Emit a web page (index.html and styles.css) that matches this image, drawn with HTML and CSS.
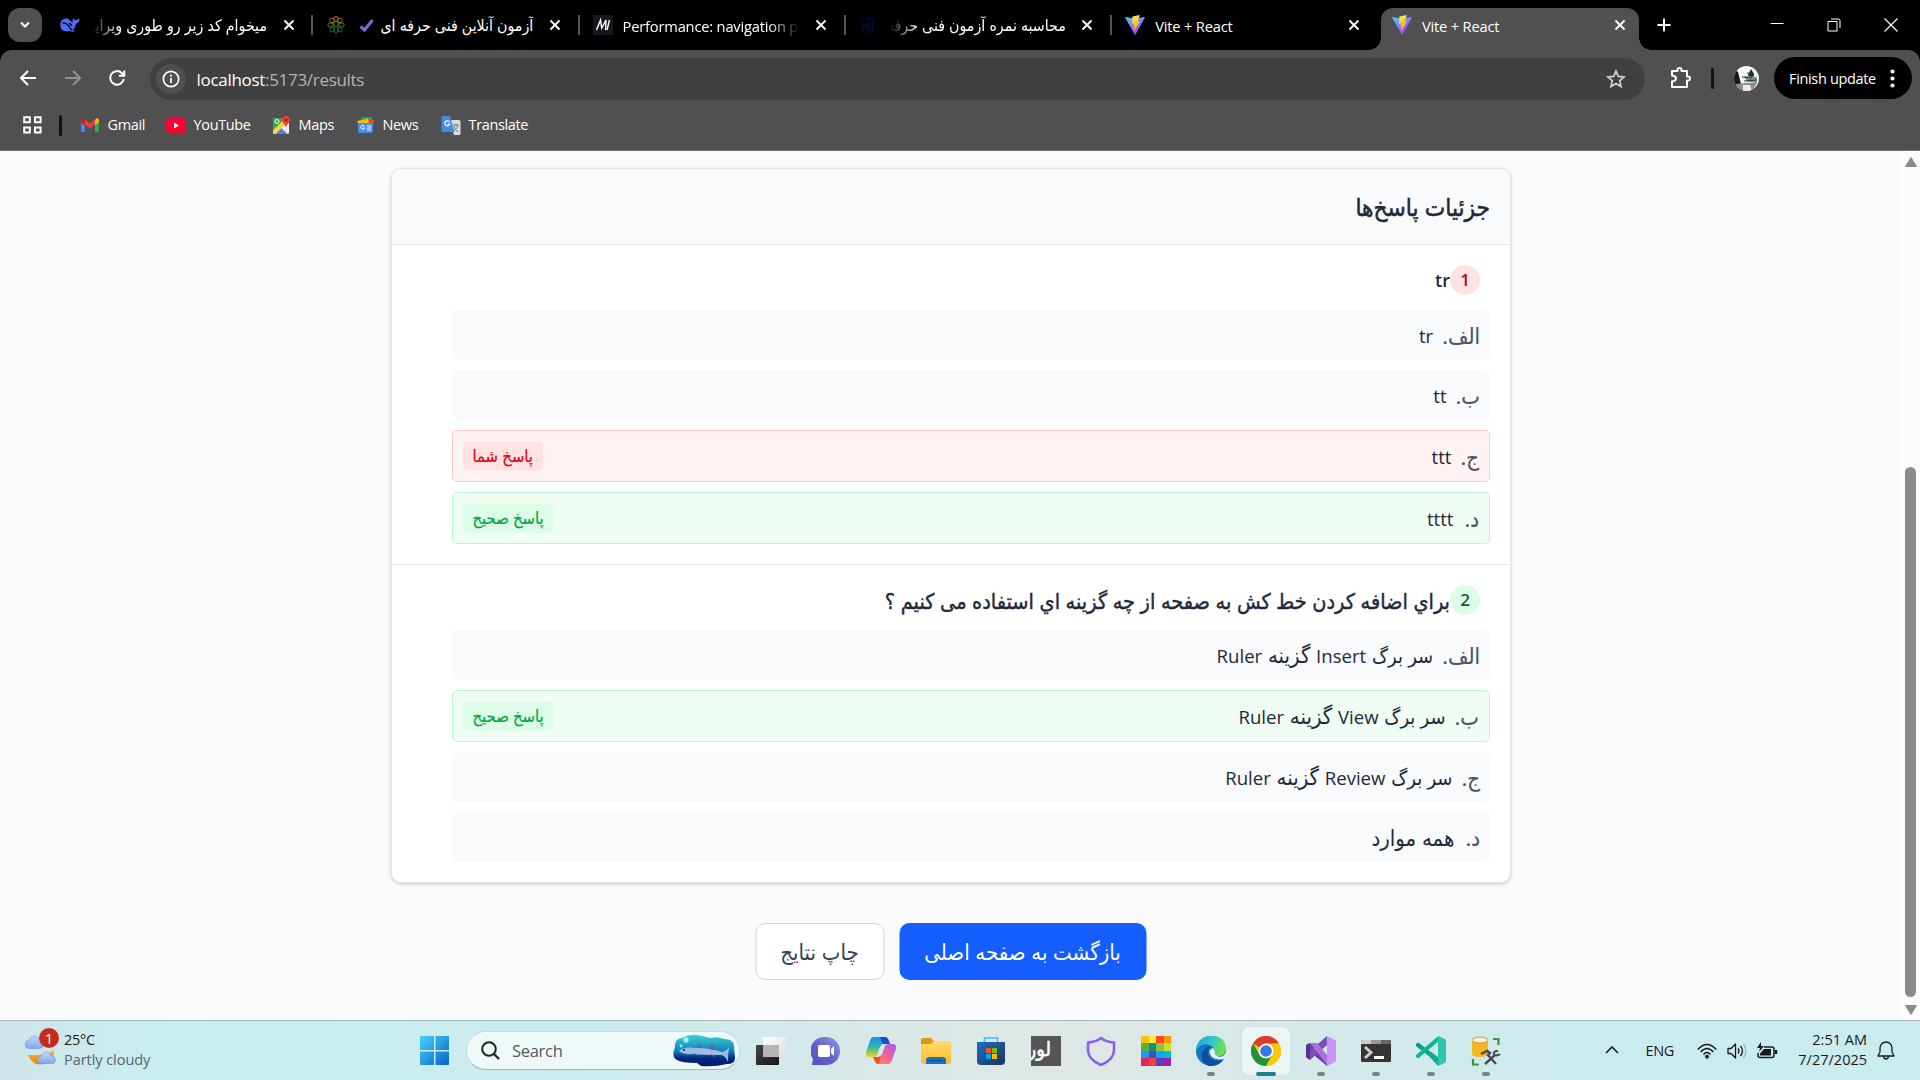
FILE: index.html
```html
<!DOCTYPE html>
<html lang="fa">
<head>
<meta charset="utf-8">
<title>Vite + React</title>
<link rel="stylesheet" href="styles.css">
</head>
<body>
<svg class="defs" width="0" height="0" aria-hidden="true">
  <defs>
    <linearGradient id="viteA" x1="0" y1="0" x2=".6" y2="1"><stop offset="0" stop-color="#41d1ff"/><stop offset="1" stop-color="#bd34fe"/></linearGradient>
    <linearGradient id="viteB" x1=".4" y1="0" x2=".6" y2="1"><stop offset="0" stop-color="#ffea83"/><stop offset=".2" stop-color="#ffdd35"/><stop offset="1" stop-color="#ffa800"/></linearGradient>
    <linearGradient id="winG" x1="0" y1="0" x2="1" y2="1"><stop offset="0" stop-color="#4cd0fb"/><stop offset="1" stop-color="#0067c6"/></linearGradient>
    <linearGradient id="sea" x1="0" y1="0" x2="0" y2="1"><stop offset="0" stop-color="#3ed0d0"/><stop offset=".5" stop-color="#1482bd"/><stop offset=".75" stop-color="#04277e"/><stop offset="1" stop-color="#031a68"/></linearGradient>
    <linearGradient id="dark" x1="0" y1="0" x2="1" y2="1"><stop offset="0" stop-color="#444"/><stop offset="1" stop-color="#161616"/></linearGradient>
    <linearGradient id="light" x1="0" y1="0" x2="1" y2="1"><stop offset="0" stop-color="#fff"/><stop offset="1" stop-color="#dcdcdc"/></linearGradient>
    <linearGradient id="chat" x1="0" y1="1" x2="1" y2="0"><stop offset="0" stop-color="#4a50c4"/><stop offset=".5" stop-color="#6a62c4"/><stop offset="1" stop-color="#8ba0f0"/></linearGradient>
    <linearGradient id="copA" x1="0" y1="0" x2="0" y2="1"><stop offset="0" stop-color="#1b8df0"/><stop offset=".5" stop-color="#2bb7b0"/><stop offset="1" stop-color="#f5d21c"/></linearGradient>
    <linearGradient id="copB" x1="1" y1="0" x2="0" y2="1"><stop offset="0" stop-color="#a35cf0"/><stop offset=".5" stop-color="#f0629a"/><stop offset="1" stop-color="#ff9a3c"/></linearGradient>
    <linearGradient id="fold" x1="0" y1="0" x2="0" y2="1"><stop offset="0" stop-color="#ffdc6e"/><stop offset="1" stop-color="#fdbc2c"/></linearGradient>
    <linearGradient id="store" x1="0" y1="0" x2="1" y2="1"><stop offset="0" stop-color="#1b6fc0"/><stop offset="1" stop-color="#1c3460"/></linearGradient>
    <linearGradient id="edgeA" x1="0" y1="0" x2="1" y2=".4"><stop offset="0" stop-color="#259fe0"/><stop offset=".5" stop-color="#2dc4cf"/><stop offset="1" stop-color="#6ee053"/></linearGradient>
    <linearGradient id="moon" x1="0" y1="0" x2="0" y2="1"><stop offset="0" stop-color="#fbb829"/><stop offset="1" stop-color="#ea7d1c"/></linearGradient>
    <linearGradient id="cloud" x1="0" y1="0" x2="0" y2="1"><stop offset="0" stop-color="#c3d7fa"/><stop offset="1" stop-color="#7fa8ee"/></linearGradient>
    <clipPath id="face"><circle cx="12.5" cy="12.5" r="12.5"/></clipPath>
    <symbol id="x" viewBox="0 0 12 12"><path d="M1.5 1.500l9 9M10.500 1.500l-9 9" stroke="#fff" stroke-width="1.900" fill="none"/></symbol>
    <symbol id="vite" viewBox="0 0 20 20"><path d="M19.800 2.800L10.600 19.300q-.5.700-1 0L.2 2.800Q0 2 .8 2.100L10 3.700l9.100-1.600q.9 0 .7.700z" fill="url(#viteA)"/><path d="M14.400.1L7.700 1.400l-.3.400L7 8.900l2.100-.4-.6 2.900 1.200-.4-.9 4.400q.2.600.6.100L15 5.900l-2.300.5L14.700.4z" fill="url(#viteB)"/></symbol>
  </defs>
</svg>

<header class="browser">
  <div class="tabstrip">
    <div class="tab-search"><svg width="12" height="8" viewBox="0 0 12 8"><path d="M2 1.500l4 4 4-4" stroke="#fff" stroke-width="2" fill="none"/></svg></div>
    <div class="tab">
      <svg class="fav" viewBox="0 0 20 20"><path d="M.3 10C.3 5.500 3.500 3.500 7 3.500q1.500 0 2.500.8l-1 .7q3 .8 4.200 2.700-.8-3 .8-4.700.2 2 2 2.200 1.500-1 4.200-1.200-.1 3.500-3.700 4.700-.3 3.800-2.800 6l1.500 1.500q-2.200 1-5-.3Q.5 18 .3 10z" fill="#4d6bfe"/><path d="M2.500 8q4.500-1 8.500 6.500l1.500.5M9 8.500q2 .2 3 2.500" stroke="#000" stroke-width="1.300" fill="none"/></svg>
      <span class="tab-title rtl fade-left">میخوام کد زیر رو طوری ویرای&zwj;</span><svg class="close"><use href="#x"/></svg>
    </div>
    <div class="tab">
      <svg class="fav" viewBox="0 0 20 20"><g fill="none" stroke-width=".9"><g stroke="#b8751a"><ellipse cx="10" cy="4" rx="2.200" ry="2.700"/><circle cx="6" cy="5.500" r="2.300"/><circle cx="14" cy="5.500" r="2.300"/></g><g stroke="#6d8423"><circle cx="10" cy="9" r="2.500"/><ellipse cx="4.500" cy="10" rx="2.700" ry="2"/><ellipse cx="15.500" cy="10" rx="2.700" ry="2"/></g><g stroke="#168043"><ellipse cx="10" cy="14.500" rx="2" ry="3.500"/><ellipse cx="6" cy="14.500" rx="2.200" ry="2.500"/><ellipse cx="14" cy="14.500" rx="2.200" ry="2.500"/></g></g></svg>
      <span class="tab-title rtl"><span>آزمون آنلاین فنی حرفه ای</span> <svg class="check" width="15" height="14" viewBox="0 0 15 14"><path d="M1.500 8.500l4 3.500L13.500 2" stroke="#8660d4" stroke-width="3.200" fill="none"/></svg></span><svg class="close"><use href="#x"/></svg>
    </div>
    <div class="tab">
      <svg class="fav" viewBox="0 0 20 20"><path fill="#18171f" d="M0 0h20v20H0z"/><path d="M3.500 15L7.500 5l1.200 8L13 5l-.5 10M16.500 5L14 15" stroke="#fff" stroke-width="1.400" fill="none"/></svg>
      <span class="tab-title fade-right">Performance: navigation pr</span><svg class="close"><use href="#x"/></svg>
    </div>
    <div class="tab">
      <svg class="fav" viewBox="0 0 20 20"><path d="M4 16V8M4 12l4-4v8M4 3.500v2M8 5q4-4 6 0v8q0 5-5 4M11 7v6" stroke="#040932" stroke-width="1.800" fill="none"/></svg>
      <span class="tab-title rtl fade-left">محاسبه نمره آزمون فنی حرفه</span><svg class="close"><use href="#x"/></svg>
    </div>
    <div class="tab">
      <svg class="fav"><use href="#vite"/></svg><span class="tab-title">Vite + React</span><svg class="close"><use href="#x"/></svg>
    </div>
    <div class="tab active">
      <svg class="fav"><use href="#vite"/></svg><span class="tab-title">Vite + React</span><svg class="close"><use href="#x"/></svg>
    </div>
    <svg class="plus" width="14" height="14" viewBox="0 0 14 14"><path d="M7 .5v13M.5 7h13" stroke="#fff" stroke-width="2"/></svg>
    <div class="window-buttons">
      <svg width="14" height="14" viewBox="0 0 14 14"><path d="M.5 5.500h13" stroke="#fff"/></svg>
      <svg width="14" height="14" viewBox="0 0 14 14"><path d="M1 3.500h9v9.500H1zM4 1h7.500q1.500 0 1.500 1.500V10" stroke="#fff" fill="none"/></svg>
      <svg width="14" height="14" viewBox="0 0 14 14"><path d="M.5.500l13 13M13.500.500l-13 13" stroke="#fff" stroke-width="1.200"/></svg>
    </div>
  </div>

  <div class="toolbar">
    <svg class="nav" viewBox="0 0 18 18"><path d="M17 9H2.500M9 2L2 9l7 7" stroke="#fff" stroke-width="2" fill="none"/></svg>
    <svg class="nav" viewBox="0 0 18 18"><path d="M1 9h14.500M9 2l7 7-7 7" stroke="#929292" stroke-width="2" fill="none"/></svg>
    <svg class="nav" viewBox="0 0 18 18"><path d="M15.700 10a6.800 6.800 0 1 1-2-6L16 6.300M16.300 1.500v5.300h-5.300" stroke="#fff" stroke-width="2" fill="none"/></svg>
    <div class="address">
      <span class="info"><svg width="18" height="18" viewBox="0 0 18 18"><circle cx="9" cy="9" r="7.700" stroke="#fff" stroke-width="1.700" fill="none"/><path d="M9 8v5M9 4.800v2" stroke="#fff" stroke-width="1.700"/></svg></span>
      <span class="url"><b>localhost</b>:5173/results</span>
      <svg width="20" height="20" viewBox="0 0 20 20"><path d="M10 2l2.300 5.400 5.800.5-4.400 3.900 1.300 5.700-5-3-5 3 1.300-5.700-4.400-3.900 5.800-.5z" stroke="#d0d0d0" stroke-width="1.700" fill="none"/></svg>
    </div>
    <svg class="puzzle" width="22" height="22" viewBox="0 0 22 22"><path d="M2 4h5.500V3a2 2 0 0 1 4 0v1H17v5.500h1a2 2 0 0 1 0 4h-1V20H2v-5.500q4-.5 4-3t-4-3z" stroke="#fff" stroke-width="2" fill="none" stroke-linejoin="round"/></svg>
    <i class="sep"></i>
    <svg class="avatar" width="25" height="25" viewBox="0 0 25 25"><g clip-path="url(#face)"><path fill="#f5f5f5" d="M0 0h25v25H0z"/><path fill="#151515" d="M0 3l4 3 3 12-7 4z"/><path fill="#222b2c" d="M17 3l3 5-1 7-3-2-2-4z"/><path fill="#7a9290" d="M10 10l13 1v6l-10-1z"/><path fill="#8b8d98" d="M2 18l9-1 12 0-5 8H3z"/><path fill="#f2e9ec" d="M9 19h7l2 6H9z"/><path d="M8 11l10 1M10 15l13-1M13 7l7 1" stroke="#303636"/></g></svg>
    <div class="update"><span>Finish update</span><svg width="5" height="19" viewBox="0 0 5 19"><g fill="#fff"><circle cx="2.500" cy="2.500" r="2.100"/><circle cx="2.500" cy="9.500" r="2.100"/><circle cx="2.500" cy="16.500" r="2.100"/></g></svg></div>
  </div>

  <nav class="bookmarks">
    <svg class="apps" width="19" height="18" viewBox="0 0 19 18"><path d="M1.200 1.200h5.600v5H1.200zM12 1.200h5.600v5H12zM1.200 11.500h5.600v5H1.200zM12 11.500h5.600v5H12z" stroke="#fff" stroke-width="2" fill="none"/></svg>
    <i class="sep"></i>
    <span class="bm gmail"><svg width="20" height="16" viewBox="0 0 20 16"><path fill="#4285f4" d="M1 3l4 3v9H2.500Q1 15 1 13.500z"/><path fill="#34a853" d="M15 6l4-3v10.500q0 1.500-1.500 1.500H15z"/><path fill="#ea4335" d="M3 1l7 5.500L17 1l1 4-8 6.500L2 5z"/><path fill="#fbbc04" d="M15 3l1.500-1.500Q19 .5 19 3.500V5l-4 3.500z"/><path fill="#c5221f" d="M1 3.500Q1 .5 3.500 1.500L5 3v5.500L1 5.500z"/></svg>Gmail</span>
    <span class="bm yt"><svg width="20" height="15" viewBox="0 0 20 15"><rect width="20" height="15" rx="4" fill="#f03"/><path d="M8 4.500v6l5-3z" fill="#fff"/></svg>YouTube</span>
    <span class="bm maps"><svg width="19" height="19" viewBox="0 0 19 19"><rect x="1" y="2" width="16" height="16" rx="1.500" fill="#e8eaed"/><path fill="#34a853" d="M1 3q0-1 1-1h11L1 16z"/><path fill="#fdd13a" d="M1 14L13 3l3 3L4 18H1z"/><path fill="#fff" d="M3 18L17 6v3L8 18z"/><path fill="#4285f4" d="M3.500 18l6-6 6 6z"/><path fill="#e94335" d="M14 0a4 4 0 0 1 4 4c0 3-3.500 4-4 8-.5-4-4-5-4-8a4 4 0 0 1 4-4z"/><circle cx="14" cy="4" r="1.500" fill="#90201b"/><circle cx="5" cy="5.500" r="2" stroke="#fff" fill="none"/></svg>Maps</span>
    <span class="bm news"><svg width="18" height="16" viewBox="0 0 18 16"><path fill="#1fa855" d="M4 0h11v6H4z"/><path fill="#ea4335" d="M11 2l6 1-1 6h-5z"/><path fill="#fbbc04" d="M0 4l11-2.500 1 5L2 9z"/><path fill="#4a8cf7" d="M1 6h15v8.500q0 1.500-1.500 1.500h-12Q1 16 1 14.500z"/><path d="M7.500 9.200A2 2 0 1 0 7.700 11H6M10 9h4M10 11h4M10 13h4" stroke="#fff" fill="none"/></svg>News</span>
    <span class="bm trans"><svg width="20" height="19" viewBox="0 0 20 19"><path fill="#dadce0" d="M8 4h10q1.500 0 1.500 1.500v12q0 1.500-1.500 1.500h-5z"/><path fill="#4a86e8" d="M2 0h7l4.500 16H2Q.5 16 .5 14.500v-13Q.5 0 2 0z"/><path d="M8.500 6.200A2.500 2.500 0 1 0 8.700 8H6.500" stroke="#fff" stroke-width="1.200" fill="none"/><path d="M12 9h6M15 7.500V9M17 9q-1 4-4 6M13 10q1 4 4 6" stroke="#687780" fill="none"/></svg>Translate</span>
  </nav>
</header>

<main class="viewport">
  <div class="page" dir="rtl">
    <section class="card">
      <h2 class="card-head"><span>جزئیات پاسخ‌ها</span></h2>
      <article class="question">
        <h3 class="q-head"><span class="num wrong">1</span><span class="q-text en">tr</span></h3>
        <ul class="options">
          <li><span class="letter">الف.</span><span class="opt"><span class="en">tr</span></span></li>
          <li><span class="letter">ب.</span><span class="opt"><span class="en">tt</span></span></li>
          <li class="bad"><span class="letter">ج.</span><span class="opt"><span class="en">ttt</span></span><span class="tag">پاسخ شما</span></li>
          <li class="good"><span class="letter">د.</span><span class="opt"><span class="en">tttt</span></span><span class="tag">پاسخ صحیح</span></li>
        </ul>
      </article>
      <article class="question">
        <h3 class="q-head"><span class="num right">2</span><span class="q-text">براي اضافه کردن خط کش به صفحه از چه گزینه اي استفاده می کنیم ؟</span></h3>
        <ul class="options">
          <li><span class="letter">الف.</span><span class="opt"><span class="menu">سر برگ</span> <span class="en">Insert</span> گزینه <span class="en">Ruler</span></span></li>
          <li class="good"><span class="letter">ب.</span><span class="opt"><span class="menu">سر برگ</span> <span class="en">View</span> گزینه <span class="en">Ruler</span></span><span class="tag">پاسخ صحیح</span></li>
          <li><span class="letter">ج.</span><span class="opt"><span class="menu">سر برگ</span> <span class="en">Review</span> گزینه <span class="en">Ruler</span></span></li>
          <li><span class="letter">د.</span><span class="opt">همه موارد</span></li>
        </ul>
      </article>
    </section>
    <div class="actions">
      <button class="btn primary"><span>بازگشت به صفحه اصلی</span></button>
      <button class="btn outline"><span>چاپ نتایج</span></button>
    </div>
  </div>
  <div class="scrollbar">
    <svg width="12" height="10" viewBox="0 0 12 10"><path d="M6 .5L11.500 9.500H.5z" fill="#8b8b8b" stroke="#8b8b8b" stroke-linejoin="round"/></svg>
    <i class="thumb"></i>
    <svg width="12" height="10" viewBox="0 0 12 10"><path d="M6 9.500L11.500.5H.5z" fill="#8b8b8b" stroke="#8b8b8b" stroke-linejoin="round"/></svg>
  </div>
</main>

<footer class="taskbar">
  <div class="weather">
    <svg width="36" height="38" viewBox="0 0 36 38"><path d="M29 19Q22 25 3 24q4 10 13 9.500Q30 32 29 19z" fill="url(#moon)"/><path d="M4 17.500a4 4 0 0 1 0-8q1-4.500 5-4.500 4 0 5.500 4 4 0 4 4t-4 4.500z" fill="url(#cloud)" stroke="#7398df" stroke-width=".6"/><path d="M16 32.500a3.500 3.500 0 0 1 0-7q1.500-4.500 5.500-4.500t5 4q4 0 4 4t-4 3.500z" fill="url(#cloud)" stroke="#7398df" stroke-width=".6"/></svg>
    <span class="count">1</span>
    <div class="weather-text"><span>25°C</span><span class="dim">Partly cloudy</span></div>
  </div>
  <svg class="start" width="30" height="30" viewBox="0 0 30 30"><path d="M1 0h13v14H0V1q0-1 1-1zM15.500 0H29v14H15.500zM0 15.500h14V29H1q-1 0-1-1zM15.500 15.500H29V28q0 1-1 1H15.500z" fill="url(#winG)"/></svg>
  <div class="search">
    <svg width="19" height="19" viewBox="0 0 19 19"><circle cx="8" cy="8" r="6.800" stroke="#222" stroke-width="2" fill="none"/><path d="M13 13l5 5" stroke="#222" stroke-width="2.300"/></svg>
    <span>Search</span>
    <svg width="62" height="33" viewBox="0 0 62 33"><path d="M2 13Q1 5 9 4 16 0 24 1q7 1 13 3 8-2 14 1 10 0 10 7l1 12q0 6-8 6-12 3-26 2l-4-3Q8 29 4 26-2 23 2 13z" fill="url(#sea)"/><circle cx="13" cy="6" r="2.700" fill="#a5edf0"/><circle cx="8" cy="12" r="1.400" fill="#a5edf0"/><path d="M6 17q5-5 17-3 15 0 26 4 5-1 7-5-1 8-1 15-3-7-7-7-20 0-28-1-9 1-14-3z" fill="#94bfe3"/><path d="M9 17q20 0 39 3" stroke="#d7a9db" fill="none"/><path d="M23 14l4-4 1 4M36 15l3-5 2 6M22 19l2 3M38 20l4 3" stroke="#546c9e" fill="#546c9e"/><circle cx="11" cy="16" r="1" fill="#123"/></svg>
  </div>
  <div class="apps-row">
    <div class="app"><svg viewBox="0 0 30 30"><rect x="0" y="9" width="23" height="20" rx="1" fill="url(#dark)"/><rect x="7" y="1" width="23" height="20" rx="1" fill="url(#light)"/><path d="M7 9h16v12H7z" fill="#b4b4b4"/></svg></div>
    <div class="app"><svg viewBox="0 0 30 30"><path d="M15 1a14 14 0 1 1 0 28H1l1-6A14 14 0 0 1 15 1z" fill="url(#chat)"/><rect x="7" y="9" width="12" height="12" rx="2" fill="#fff"/><path d="M20 13l3-3v10l-3-3z" fill="#fff"/></svg></div>
    <div class="app"><svg viewBox="0 0 30 30"><path d="M8 1h10q3 0 4 4l1 3h-5q-3 0-4 3l-3 8q-1 2-4 2H3q-4 0-3-5L4 5q1-4 4-4z" fill="url(#copA)"/><path d="M14 1h5q3 0 4 4l1 3h-5q-3 0-4-4z" fill="#1451c7"/><path d="M22 28H12q-3 0-4-4l-1-3h5q3 0 4-3l3-8q1-2 4-2h4q4 0 3 5l-4 11q-1 4-4 4z" fill="url(#copB)"/><path d="M7 21h5q2 0 3-2l-2 9q-3 0-4-4z" fill="#ef4e2b"/></svg></div>
    <div class="app"><svg viewBox="0 0 30 30"><path d="M0 4q0-2 2-2h8l3 3h15v10H0z" fill="#dd9b0b"/><path d="M0 8h10l3-3h15q2 0 2 2v19q0 2-2 2H2q-2 0-2-2z" fill="url(#fold)"/><path d="M5 28v-4q0-3 3-3h14q3 0 3 3v4z" fill="#1474c8"/><path d="M8 24.500h13" stroke="#0b4d92" stroke-width="1.200"/></svg></div>
    <div class="app"><svg viewBox="0 0 30 30"><path d="M8.500 7V2h13v5" stroke="#32c5f4" stroke-width="1.600" fill="none"/><path d="M1 6h28v19q0 4-4 4H5q-4 0-4-4z" fill="url(#store)"/><path fill="#f25022" d="M10 12h5v5h-5z"/><path fill="#7fba00" d="M16 12h5v5h-5z"/><path fill="#00a4ef" d="M10 18h5v5h-5z"/><path fill="#ffb900" d="M16 18h5v5h-5z"/></svg></div>
    <div class="app"><span class="word-app">لور</span></div>
    <div class="app"><svg viewBox="0 0 30 30"><path d="M15 2Q20 6 28 6.500v8Q27.500 24 15 29 2.500 24 2 14.500v-8Q10 6 15 2z" stroke="#8a5cf6" stroke-width="2.600" fill="none" stroke-linejoin="round"/></svg></div>
    <div class="app"><div class="pixels"><i></i><i></i><i></i><i></i><i></i><i></i><i></i><i></i><i></i><i></i><i></i><i></i><i></i><i></i><i></i><i></i></div></div>
    <div class="app run"><svg viewBox="0 0 30 30"><circle cx="15" cy="15" r="15" fill="#1276c8"/><path d="M0 14Q2 0 15 0q14 0 15 12 0 8-8 8.500-5 0-4-3 2-5-3-8Q7 5 0 14z" fill="url(#edgeA)"/><path d="M17 10q-6 1-5 8 2 7 9 7 4 0 7-2-6 8-15 7Q4 26 6 17q3-7 11-7z" fill="#0c509b"/><path d="M18 18q2 3 6 2.700 4 0 6-4.700l1 7-2 0q-12 2-11-5z" fill="#d6e9e9"/><path d="M17 12q-5 2-3 6 2 5 8 5 4 0 7-2-10 1-10.500-3.500 1-3-1.500-5.500z" fill="#e9f1f3"/></svg></div>
    <div class="app run current"><svg viewBox="0 0 30 30"><circle cx="15" cy="15" r="15" fill="#fdc70e"/><path d="M15 15L2 7.500A15 15 0 0 1 28 7.500H15z" fill="#dc3b2d"/><path d="M2 7.500A15 15 0 0 0 15 30l6.500-11.200L15 15 8.500 18.500z" fill="#23913e"/><path d="M28 7.500A15 15 0 0 1 15 30l6.500-11.300V7.500z" fill="#fdc70e"/><circle cx="15" cy="15" r="7.500" fill="#fff"/><circle cx="15" cy="15" r="5.800" fill="#3478ea"/></svg></div>
    <div class="app run"><svg viewBox="0 0 30 30"><path d="M0 9l4-2 17 15v8L4 16v0L0 21z" fill="#6b42a3"/><path d="M0 21l4 3L21 9V0L5 14z" fill="#7c4fb6"/><path d="M0 9l4-2v17l-4-3z" fill="#593192"/><path d="M4 7l7 0 11 13v10z" fill="#a873d9"/><path d="M21 0l8 4q1 .5 1 2v18q0 1.500-1 2l-8 4z" fill="#cc92f8"/></svg></div>
    <div class="app run"><svg viewBox="0 0 30 30"><rect y="4" width="30" height="22" rx="1.500" fill="#343434"/><path fill="#ccc" d="M1.500 4H10v4H0V5.500Q0 4 1.500 4z"/><path fill="#999" d="M10 4h10v4H10z"/><path fill="#666" d="M20 4h8.500Q30 4 30 5.500V8H20z"/><path d="M4 11l6 5.500L4 22" stroke="#ccc" stroke-width="3" fill="none"/><path d="M13 21.500h10" stroke="#fff" stroke-width="3"/></svg></div>
    <div class="app run"><svg viewBox="0 0 30 30"><path d="M2 9l21 16" stroke="#0d9d7f" stroke-width="4.200" stroke-linecap="round"/><path d="M2 20L22 3" stroke="#0fb598" stroke-width="4.200" stroke-linecap="round"/><path d="M22 0v30L11 18l11-9z" fill="#12ad91"/><path d="M22 9v12l-8-6z" fill="#cfebec"/><path d="M22 0l7 3q1 .5 1 2v20q0 1.500-1 2l-7 3z" fill="#2bc6ad"/></svg></div>
    <div class="app run"><svg viewBox="0 0 30 30"><path d="M1 4v14q0 3 8 3t8-3V4z" fill="#f7b528"/><ellipse cx="9" cy="4" rx="8" ry="3" fill="#f4f0e3" stroke="#dc9d18"/><path d="M22 3h5.500v6M2 23v5.500h6" stroke="#3b9440" stroke-width="2.200" fill="none"/><path d="M10 18l6-3 3 2-2 2 8 9M14 28l10-9" stroke="#4b4d50" stroke-width="2.400" fill="none"/><path d="M27 15q-5 0-4 3.500 3 2 6-.5" stroke="#4b4d50" stroke-width="2" fill="none"/></svg></div>
  </div>
  <div class="tray">
    <svg class="up" width="14" height="8" viewBox="0 0 14 8"><path d="M1 7l6-6 6 6" stroke="#1b1b1b" stroke-width="1.600" fill="none"/></svg>
    <span class="lang">ENG</span>
    <svg class="wifi" width="20" height="16" viewBox="0 0 20 16"><g stroke="#1b1b1b" stroke-width="1.400" fill="none"><path d="M.7 6.500q9.300-10 18.600 0M3.700 9q6.300-7 12.600 0M6.500 11.500q3.500-4 7 0"/></g><circle cx="10" cy="13.700" r="1.900" fill="#1b1b1b"/></svg>
    <svg class="vol" width="20" height="16" viewBox="0 0 20 16"><path d="M1 5.500h3L8.500 1v14L4 10.500H1z" stroke="#1b1b1b" stroke-width="1.300" fill="none" stroke-linejoin="round"/><path d="M11 5.500q2 2.500 0 5M13.500 3q4 5 0 10" stroke="#1b1b1b" stroke-width="1.300" fill="none"/><path d="M16.500 1q5 7 0 14" stroke="#8faaaa" stroke-width="1.100" fill="none"/></svg>
    <svg class="bat" width="21" height="17" viewBox="0 0 21 17"><path d="M7 5h8q2 0 2 2v6.500q0 2-2 2H3q-2 0-2-2V11" stroke="#1b1b1b" stroke-width="1.500" fill="none"/><path d="M3 13.500v-2L7 7h7v6.500zM18 8h2q1 2.500 0 4h-2zM4 0L0 6h3l-1 4 5-6H4z" fill="#1b1b1b"/></svg>
    <div class="clock"><span>2:51 AM</span><span>7/27/2025</span></div>
    <svg class="bell" width="18" height="19" viewBox="0 0 18 19"><path d="M1 15L3 11V7a6 6 0 0 1 12 0v4l2 4zM6.500 15.500q.5 2.500 2.500 2.500t2.500-2.500" stroke="#1b1b1b" stroke-width="1.300" fill="none" stroke-linejoin="round"/></svg>
  </div>
</footer>
</body>
</html>
```
FILE: styles.css
```css
* { box-sizing: border-box; }
body {
  margin: 0;
  width: 1920px;
  height: 1080px;
  overflow: hidden;
  display: flex;
  flex-direction: column;
  font-family: "Open Sans", "DejaVu Sans Condensed", "DejaVu Sans", sans-serif;
  font-size: 15px;
  color: #1e2939;
}
svg { display: block; flex: none; }
.defs { position: absolute; }

/* Browser chrome */
.browser { height: 151px; flex: none; background: #000; border-bottom: 1px solid #7b7777; color: #fff; display: flex; flex-direction: column; }
.tabstrip { height: 50px; display: flex; align-items: center; }
.tab-search { width: 34px; height: 34px; margin: 0 4px 0 8px; border-radius: 12px; background: #505050; display: grid; place-items: center; }
.tab { position: relative; width: 266.3px; height: 42px; margin-top: 8px; padding: 0 17px 8px 14px; display: flex; align-items: center; flex: none; }
.tab:not(.active):not(:nth-child(6))::after { content: ""; width: 2px; height: 20px; position: absolute; right: -1px; top: 7px; background: #555; }
.fav { width: 20px; height: 20px; margin-right: 10px; }
.tab-title { width: 177px; white-space: nowrap; overflow: hidden; font-size: 14.700px; letter-spacing: -.2px; line-height: 28px; padding-top: 1px; }
.tab-title.rtl { direction: rtl; font-size: 15.800px; letter-spacing: 0; display: flex; align-items: center; padding: 0; }
.check { margin-right: 6px; }
.fade-left { mask-image: linear-gradient(to right, transparent, #000 30px); }
.fade-right { mask-image: linear-gradient(to left, transparent, #000 32px); }
.close { width: 12px; height: 12px; margin-left: 15.500px; }
.tab.active { width: 258px; margin-left: 3.500px; background: #505050; border-radius: 12px 12px 0 0; padding: 0 13px 8px 11px; }
.tab.active::before, .tab.active::after { content: ""; position: absolute; bottom: 0; width: 12px; height: 12px; }
.tab.active::before { left: -12px; background: radial-gradient(circle at 0 0, transparent 11.500px, #505050 12px); }
.tab.active::after { right: -12px; background: radial-gradient(circle at 100% 0, transparent 11.500px, #505050 12px); }
.plus { margin-left: 18.500px; }
.window-buttons { margin-left: auto; margin-right: 22px; display: flex; gap: 43px; }
.toolbar { height: 56px; padding: 0 8px 0 19px; background: #505050; border-radius: 12px 12px 0 0; display: flex; align-items: center; flex: none; }
.nav { width: 18px; height: 18px; margin-right: 26.500px; }
.nav + .nav + .nav { margin-right: 24px; }
.address { width: 1496px; height: 42px; margin-top: 2px; padding: 0 19px 0 6px; border-radius: 21px; background: #404040; display: flex; align-items: center; }
.info { width: 30px; height: 30px; border-radius: 50%; background: #505050; display: grid; place-items: center; }
.url { flex: 1; margin-left: 10.500px; font-size: 17px; letter-spacing: -.3px; color: #b4b4b4; }
.url b { color: #fff; font-weight: 400; }
.puzzle { margin: 0 19px 0 25px; }
.sep { width: 3px; height: 21px; background: #111; border-radius: 2px; flex: none; }
.avatar { margin: 0 15px 0 20px; }
.update { width: 138px; height: 42px; border-radius: 21px; background: #000; display: flex; align-items: center; justify-content: space-between; padding: 0 17px 0 15px; white-space: nowrap; font-size: 14.500px; letter-spacing: -.35px; }
.bookmarks { flex: 1; display: flex; align-items: center; background: #505050; padding: 0 0 6px 23px; font-size: 14.500px; }
.apps { margin-right: 17px; }
.bm { display: flex; align-items: center; gap: 8px; letter-spacing: -.35px; line-height: 18px; flex: none; }
.gmail { margin-left: 17.500px; width: 86px; }
.yt { width: 106px; }
.maps { width: 85px; }
.news { width: 84px; }

/* Results page */
.viewport { flex: 1; min-height: 0; display: flex; background: #f9fafc; }
.page { width: 1902px; padding-top: 17px; display: flex; flex-direction: column; align-items: center; }
.card { width: 1120px; border: 1px solid #e5e7eb; border-radius: 10px; background: #fff; box-shadow: 0 1px 4px rgba(0, 0, 0, .12), 0 1px 2px rgba(0, 0, 0, .1); overflow: hidden; }
.card-head { margin: 0; height: 76px; padding: 0 20px 1px; display: flex; align-items: center; background: #f9fafc; border-bottom: 1px solid #e5e7eb; font-size: 24.200px; font-weight: 400; -webkit-text-stroke: .5px #1e2939; }
.question { padding: 20px; }
.question + .question { border-top: 1px solid #e5e7eb; }
.q-head { margin: 0 10px 15px; height: 30px; display: flex; align-items: center; font-size: 21.500px; font-weight: 400; white-space: nowrap; }
.q-text { -webkit-text-stroke: .4px #1e2939; }
.num { width: 30px; height: 30px; border-radius: 50%; text-align: center; line-height: 30px; font-size: 17px; font-weight: 600; }
.num.wrong { background: #ffe2e2; color: #a90f18; }
.num.right { background: #dcfce7; color: #016630; }
.options { list-style: none; margin: 0 0 0 40px; padding: 0; display: flex; flex-direction: column; gap: 10px; }
.options li { height: 50px; padding: 0 10px; display: flex; align-items: center; border-radius: 5px; background: #f9fafc; font-size: 22px; line-height: 28px; white-space: nowrap; }
.options li.bad { height: 52px; background: #fef2f2; border: 1px solid #ffc9c9; }
.options li.good { height: 52px; background: #f0fdf4; border: 1px solid #b9f8cf; }
.en { font-size: 18.600px; }
.menu { font-size: 20px; }
.q-head .en { font-size: 18px; font-weight: 600; -webkit-text-stroke: 0; }
.letter { margin-left: 9px; color: #4a5565; -webkit-text-stroke: .2px #4a5565; }
.options li:last-child .letter { margin-left: 11px; }
.tag { margin: 0 auto 0 0; height: 29px; line-height: 27px; padding: 0 9.500px; border-radius: 5px; font-size: 16.500px; transform: translateY(-.5px); -webkit-text-stroke: .2px currentColor; }
.bad .tag { background: #ffe2e2; color: #e7000b; }
.good .tag { background: #dcfce7; color: #00a63e; }
.actions { margin: 40px 0 0 0; display: flex; gap: 15px; transform: translateX(-.5px); }
.btn { height: 57px; border-radius: 10px; font: 22px/28px "Open Sans", "DejaVu Sans Condensed", "DejaVu Sans", sans-serif; display: grid; place-items: center; padding: 0 0 2px; white-space: nowrap; }
.primary { width: 247px; background: #155dfc; color: #fff; border: 0; }
.outline { width: 129px; background: #fff; color: #364153; border: 1px solid #d1d5dc; }
.scrollbar { width: 18px; background: #fcfcfc; display: flex; flex-direction: column; align-items: center; padding: 6px 1px 5px 0; }
.thumb { width: 11px; height: 530px; margin: 300px 0 auto; border-radius: 6px; background: #8b8b8b; }

/* Desktop taskbar */
.taskbar { height: 60px; flex: none; border-top: 1px solid #a7b9bf; background: linear-gradient(90deg, #cfe5e9 0, #c9eeef 9%, #cbecee 30%, #dae7e7 47%, #dfe7e6 56%, #d6e8e8 67%, #caecee 85%, #caeced 100%); display: flex; align-items: center; color: #1b1b1b; }
.weather { position: relative; width: 420px; display: flex; align-items: center; padding: 0 0 2px 25px; }
.count { position: absolute; left: 39px; top: -2px; width: 20px; height: 20px; border-radius: 50%; background: #c42b1c; color: #fff; text-align: center; font-size: 15px; line-height: 20px; }
.weather-text { margin-left: 3px; display: flex; flex-direction: column; line-height: 20px; font-size: 14.500px; letter-spacing: -.3px; }
.dim { color: #53676a; letter-spacing: -.05px; }
.search { width: 274px; height: 39px; margin-left: 16px; border-radius: 20px; background: #f0f9fa; border: 1px solid #c4dcdf; border-bottom-color: #9fb8ba; display: flex; align-items: center; padding: 0 4px 0 14px; font-size: 16.500px; letter-spacing: -.3px; color: #505b5c; }
.search span { flex: 1; margin-left: 12px; }
.apps-row { display: flex; margin-left: 4px; }
.app { position: relative; width: 48px; height: 48px; margin-left: 7px; border-radius: 6px; display: grid; place-items: center; }
.app:first-child { margin-left: 3px; }
.app svg { width: 30px; height: 30px; }
.run::after { content: ""; position: absolute; bottom: -1px; left: 20px; width: 8px; height: 4px; border-radius: 2px; background: #758586; }
.current { background: #ebf5f6; box-shadow: 0 0 1px #aac2c4; }
.current::after { left: 14px; width: 20px; background: #1e7f8d; }
.word-app { width: 30px; height: 30px; background: #555; color: #fff; font-size: 20px; line-height: 26px; direction: rtl; overflow: hidden; padding-right: 10px; -webkit-text-stroke: .6px #fff; }
.pixels { width: 30px; height: 30px; display: grid; grid-template-columns: repeat(4, 1fr); grid-template-rows: repeat(4, 1fr); }
.pixels i { background: #ffc107; }
.pixels i:nth-child(2) { background: #ffeb3b; }
.pixels i:nth-child(3) { background: #ff4a1c; }
.pixels i:nth-child(4) { background: #ff9800; }
.pixels i:nth-child(5) { background: #5cae3e; }
.pixels i:nth-child(6) { background: #169176; }
.pixels i:nth-child(7) { background: #8bc34a; }
.pixels i:nth-child(8) { background: #cddc39; }
.pixels i:nth-child(9) { background: #149df2; }
.pixels i:nth-child(10) { background: #3f51b5; }
.pixels i:nth-child(11) { background: #12a5f4; }
.pixels i:nth-child(12) { background: #00bcd4; }
.pixels i:nth-child(13) { background: #e91e63; }
.pixels i:nth-child(14) { background: #f44336; }
.pixels i:nth-child(15) { background: #673ab7; }
.pixels i:nth-child(16) { background: #9c1eb0; }
.tray { margin-left: auto; display: flex; align-items: center; padding: 0 25px 0 0; font-size: 14.500px; letter-spacing: -.3px; }
.up { margin-bottom: 2px; }
.lang { margin: 0 23px 0 26px; }
.wifi { margin-right: 10px; }
.vol { margin-right: 10px; }
.clock { width: 89px; display: flex; flex-direction: column; text-align: right; line-height: 20px; padding-bottom: 2px; letter-spacing: 0; }
.bell { margin-left: 10px; }
```
